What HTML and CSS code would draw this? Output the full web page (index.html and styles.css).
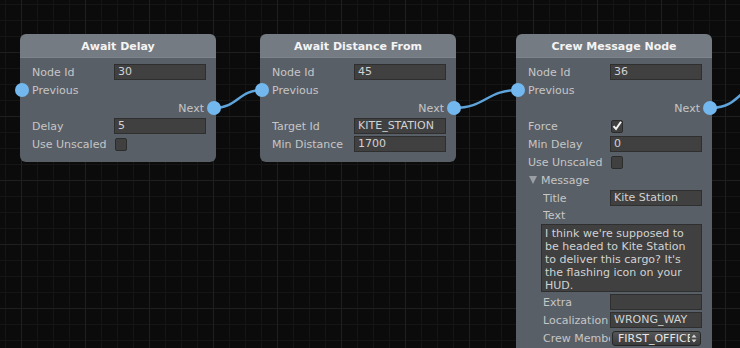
FILE: index.html
```html
<!DOCTYPE html>
<html lang="en">
<head>
  <meta charset="UTF-8" />
  <title>Node Graph</title>
  <link rel="stylesheet" href="styles.css">
</head>
<body>
  <div class="canvas">
    <svg class="wires" width="740" height="348" viewBox="0 0 740 348">
      <path d="M214 108 C238 108 238 90 262 90" />
      <path d="M454 108 C486 108 486 90 518 90" />
      <path d="M711 108 C733 108 737 96 760 78" />
    </svg>

    <div class="node n1">
      <div class="head">Await Delay</div>
      <div class="body">
        <div class="row"><span class="lbl">Node Id</span><span class="field">30</span></div>
        <div class="row"><i class="port in"></i><span class="lbl">Previous</span></div>
        <div class="row out"><span class="lbl">Next</span><i class="port right"></i></div>
        <div class="row"><span class="lbl">Delay</span><span class="field">5</span></div>
        <div class="row"><span class="lbl">Use Unscaled</span><span class="check"></span></div>
      </div>
    </div>

    <div class="node n2">
      <div class="head">Await Distance From</div>
      <div class="body">
        <div class="row"><span class="lbl">Node Id</span><span class="field">45</span></div>
        <div class="row"><i class="port in"></i><span class="lbl">Previous</span></div>
        <div class="row out"><span class="lbl">Next</span><i class="port right"></i></div>
        <div class="row"><span class="lbl">Target Id</span><span class="field">KITE_STATION</span></div>
        <div class="row"><span class="lbl">Min Distance</span><span class="field">1700</span></div>
      </div>
    </div>

    <div class="node n3">
      <div class="head">Crew Message Node</div>
      <div class="body">
        <div class="row"><span class="lbl">Node Id</span><span class="field">36</span></div>
        <div class="row"><i class="port in"></i><span class="lbl">Previous</span></div>
        <div class="row out"><span class="lbl">Next</span><i class="port right"></i></div>
        <div class="row"><span class="lbl">Force</span>
          <span class="check">
            <svg width="12" height="12" viewBox="0 0 12 12"><path d="M2.5 6.2 L5 9 L10 1.8" /></svg>
          </span>
        </div>
        <div class="row"><span class="lbl">Min Delay</span><span class="field">0</span></div>
        <div class="row"><span class="lbl">Use Unscaled</span><span class="check"></span></div>
        <div class="row">
          <svg class="fold" width="8" height="8" viewBox="0 0 8 8"><path d="M0 0 L8 0 L4 8 Z" /></svg>
          <span>Message</span>
        </div>
        <div class="row sub"><span class="lbl">Title</span><span class="field">Kite Station</span></div>
        <div class="row sub short"><span class="lbl">Text</span></div>
        <div class="area">I think we're supposed to be headed to Kite Station to deliver this cargo? It's the flashing icon on your HUD.</div>
        <div class="row sub"><span class="lbl">Extra</span><span class="field"></span></div>
        <div class="row sub"><span class="lbl">Localization</span><span class="field">WRONG_WAY</span></div>
        <div class="row sub"><span class="lbl">Crew Member</span>
          <span class="select"><span class="val">FIRST_OFFICER</span>
            <svg width="6" height="9" viewBox="0 0 6 9"><path d="M3 0.5 L5.5 3.5 L0.5 3.5 Z M3 8.5 L5.5 5.5 L0.5 5.5 Z" /></svg>
          </span>
        </div>
      </div>
    </div>
  </div>
</body>
</html>
```

FILE: styles.css
```css
* {
  box-sizing: border-box;
}

html, body {
  margin: 0;
  padding: 0;
  overflow: hidden;
}

body {
  width: 740px;
  height: 348px;
  font-family: 'DejaVu Sans', 'Liberation Sans', sans-serif;
  font-size: 11px;
  background-color: #0b0b0b;
  background-image:
    linear-gradient(90deg, #1f1f1f 1px, transparent 1px),
    linear-gradient(180deg, #1f1f1f 1px, transparent 1px),
    linear-gradient(90deg, #151515 1px, transparent 1px),
    linear-gradient(180deg, #151515 1px, transparent 1px);
  background-size: 64px 64px, 64px 64px, 16px 16px, 16px 16px;
  background-position: 21px 0, 0 52px, 5px 0, 0 4px;
}

.canvas {
  position: relative;
  width: 740px;
  height: 348px;
}

.wires {
  position: absolute;
  left: 0;
  top: 0;
}

.wires path {
  fill: none;
  stroke: #5ea3da;
  stroke-width: 2.5;
}

/* nodes sit on a free canvas */
.node {
  position: absolute;
  top: 34px;
  width: 196px;
}

.n1 { left: 20px; }
.n2 { left: 260px; }
.n3 { left: 516px; }

.head {
  height: 24px;
  padding-top: 2px;
  line-height: 21px;
  background: #747b82;
  border-radius: 6px 6px 0 0;
  color: #f4f4f4;
  font-weight: bold;
  text-align: center;
  border-bottom: 1px solid #7c838a;
}

.body {
  background: #595f66;
  border-radius: 0 0 6px 6px;
  padding: 5px 0 9px;
}

.row {
  position: relative;
  display: flex;
  align-items: center;
  height: 18px;
  padding: 0 10px 0 12px;
  color: #c6c6c6;
  white-space: nowrap;
}

.row .lbl {
  flex: none;
  width: 82px;
  overflow: hidden;
}

.row.out {
  justify-content: flex-end;
  padding-right: 12px;
}

.row.out .lbl {
  width: auto;
}

.row.sub {
  padding-left: 27px;
}

.row.sub .lbl {
  width: 67px;
}

.row.short {
  height: 17px;
}

.field {
  flex: none;
  width: 92px;
  height: 16px;
  line-height: 14px;
  padding: 0 3px;
  background: #404040;
  border: 1px solid #2f2f2f;
  color: #d2d2d2;
  overflow: hidden;
}

.check {
  display: block;
  width: 12px;
  height: 13px;
  margin-left: 1px;
  background: #404040;
  border: 1px solid #2c2c2c;
  border-radius: 2px;
}

.check svg {
  display: block;
  margin: -1px 0 0 -1px;
}

.check path {
  fill: none;
  stroke: #f4f4f4;
  stroke-width: 2;
}

.fold {
  flex: none;
  margin: 0 4px 0 1px;
}

.fold path {
  fill: #9a9fa5;
}

.area {
  margin: 0 10px 1px 25px;
  height: 68px;
  padding: 2px 3px 0;
  line-height: 13px;
  background: #404040;
  border: 1px solid #2f2f2f;
  color: #d2d2d2;
}

.select {
  flex: none;
  display: flex;
  align-items: center;
  width: 89px;
  height: 15px;
  margin-left: 2px;
  padding: 0 3px 0 5px;
  background: linear-gradient(#565656, #3b3b3b);
  border: 1px solid #262626;
  border-radius: 3px;
  color: #e6e6e6;
  line-height: 13px;
}

.select .val {
  flex: 1;
  min-width: 0;
  overflow: hidden;
}

.select svg {
  flex: none;
  margin-left: 1px;
}

.select path {
  fill: #d8d8d8;
}

.port {
  position: absolute;
  top: 2px;
  width: 14px;
  height: 14px;
  border-radius: 50%;
  background: #72b8ee;
}

.port.in {
  left: -5px;
}

.port.right {
  right: -5px;
}
```
